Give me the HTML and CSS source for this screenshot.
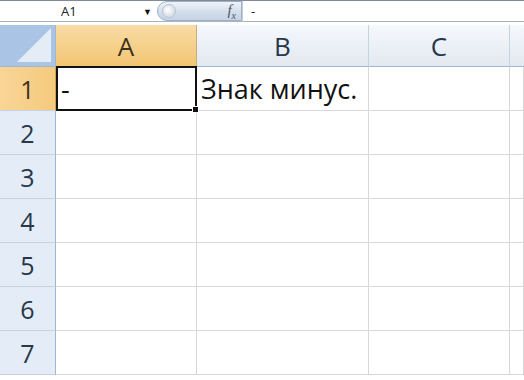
FILE: index.html
```html
<!DOCTYPE html>
<html lang="ru">
<head>
<meta charset="UTF-8" />
<title>Знак минус</title>
<link rel="stylesheet" href="styles.css">
</head>
<body>

<!-- Строка формул -->
<div class="formula-bar">
  <div class="name-box">
    <span class="cell-name">A1</span>
    <span class="drop">&#9660;</span>
  </div>
  <div class="pill">
    <span class="knob"></span>
    <span class="fx">f<sub>x</sub></span>
  </div>
  <div class="formula">-</div>
</div>

<!-- Лист -->
<div class="sheet">
  <div class="corner"><span class="tri"></span></div>
  <div class="col-head active">A</div>
  <div class="col-head">B</div>
  <div class="col-head">C</div>
  <div class="col-head last"></div>

  <div class="row-head active">1</div>
  <div class="cell selected">-</div>
  <div class="cell">Знак минус.</div>
  <div class="cell"></div>
  <div class="cell"></div>

  <div class="row-head">2</div>
  <div class="cell"></div><div class="cell"></div><div class="cell"></div><div class="cell"></div>
  <div class="row-head">3</div>
  <div class="cell"></div><div class="cell"></div><div class="cell"></div><div class="cell"></div>
  <div class="row-head">4</div>
  <div class="cell"></div><div class="cell"></div><div class="cell"></div><div class="cell"></div>
  <div class="row-head">5</div>
  <div class="cell"></div><div class="cell"></div><div class="cell"></div><div class="cell"></div>
  <div class="row-head">6</div>
  <div class="cell"></div><div class="cell"></div><div class="cell"></div><div class="cell"></div>
  <div class="row-head">7</div>
  <div class="cell"></div><div class="cell"></div><div class="cell"></div><div class="cell"></div>
</div>

</body>
</html>
```

FILE: styles.css
```css
body {
  margin: 0;
  width: 524px;
  height: 380px;
  overflow: hidden;
  background: #fff;
  font-family: "Open Sans", "Liberation Sans", sans-serif;
}

.formula-bar {
  display: flex;
  align-items: center;
  height: 22px;
  border-top: 1px solid #7f8b99;
  border-bottom: 1px solid #a7b5c4;
  margin-bottom: 3px;
  box-sizing: border-box;
  background: #fff;
}

.name-box {
  display: flex;
  align-items: center;
  width: 157px;
  height: 100%;
  font-size: 13px;
  color: #222;
}

.cell-name {
  margin-left: 61px;
}

.drop {
  margin-left: auto;
  margin-right: 5px;
  font-size: 9px;
  color: #111;
}

.pill {
  display: flex;
  align-items: center;
  width: 85px;
  height: 20px;
  box-sizing: border-box;
  border: 1px solid #9fb0c4;
  border-radius: 10px 0 0 10px;
  background: linear-gradient(#eef3f9, #d4deeb 55%, #c6d3e4);
}

.knob {
  width: 12px;
  height: 12px;
  margin-left: 4px;
  border-radius: 50%;
  background: radial-gradient(circle at 40% 40%, #ffffff, #c3cfdc);
  border: 1px solid #b7c4d3;
}

.fx {
  margin-left: auto;
  margin-right: 5px;
  font-family: "Liberation Serif", serif;
  font-style: italic;
  font-size: 15px;
  color: #4a5566;
}

.fx sub {
  font-size: 10px;
}

.formula {
  border-left: 1px solid #c3ccd7;
  height: 100%;
  padding-left: 8px;
  font-size: 13px;
  line-height: 20px;
  color: #222;
}

.sheet {
  display: grid;
  grid-template-columns: 56px 141px 172px 141px 14px;
  grid-template-rows: 42px repeat(7, 44px);
}

.corner {
  position: relative;
  background: #a9c4e5;
  border-right: 1px solid #9eb6ce;
  border-bottom: 1px solid #9eb6ce;
}

.tri {
  position: absolute;
  right: 4px;
  bottom: 4px;
  width: 0;
  height: 0;
  border-left: 34px solid transparent;
  border-bottom: 34px solid #e4ecf6;
}

.col-head {
  display: flex;
  align-items: center;
  justify-content: center;
  font-size: 26px;
  color: #27384a;
  background: linear-gradient(#f5f8fc, #e3e9f1);
  border-right: 1px solid #c5d2df;
  border-bottom: 1px solid #9eb6ce;
}

.col-head.active {
  color: #3b3320;
  background: linear-gradient(#f9dca6, #f2c572);
  border-right-color: #c6ad7a;
  border-bottom-color: #c9a35a;
}

.col-head.last {
  border-right: none;
}

.row-head {
  display: flex;
  align-items: center;
  justify-content: center;
  font-size: 25px;
  color: #27384a;
  background: #e4ecf7;
  border-right: 1px solid #9eb6ce;
  border-bottom: 1px solid #c5d2df;
}

.row-head.active {
  color: #3b3320;
  background: linear-gradient(90deg, #f9d597, #f5ca7d);
  border-right-color: #c9a35a;
}

.cell {
  display: flex;
  align-items: center;
  padding-left: 4px;
  font-size: 27px;
  color: #111;
  border-right: 1px solid #d8d8d8;
  border-bottom: 1px solid #d8d8d8;
  white-space: nowrap;
}

.cell.selected {
  position: relative;
  margin: -1px 0 0 0;
  border: 2px solid #111;
  padding-left: 3px;
}

.cell.selected::after {
  content: "";
  position: absolute;
  right: -4px;
  bottom: -4px;
  width: 5px;
  height: 5px;
  background: #111;
  border: 1px solid #fff;
}
```
